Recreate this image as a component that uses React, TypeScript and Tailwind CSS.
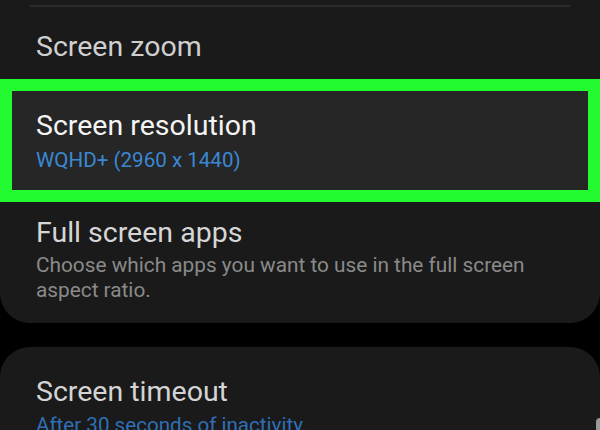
export default function App() {
  const font = { fontFamily: "Roboto, 'Noto Sans', sans-serif" };
  return (
    <div className="relative w-[600px] h-[430px] bg-black overflow-hidden flex flex-col" style={font}>
      <div className="bg-[#1a1a1a] rounded-b-[30px] flex flex-col pb-[20px]">
        <div className="mt-[5px] mx-[30px] h-[2px] bg-[#2b2b2b]" />
        <div className="mt-[23px] px-[36px] text-[28.5px] leading-[34px] text-[#cfcfcf]">Screen zoom</div>
        <div className="mt-[15px] border-[12px] border-[#22fb30] bg-[#262626] px-[24px] pt-[18px] pb-[17px] flex flex-col">
          <div className="text-[28.5px] leading-[34px] text-[#f4f4f4]">Screen resolution</div>
          <div className="mt-[4px] text-[20.6px] leading-[26px] text-[#3a88d3]">WQHD+ (2960 x 1440)</div>
        </div>
        <div className="mt-[14px] px-[36px] text-[28.5px] leading-[34px] text-[#d6d6d6]">Full screen apps</div>
        <div className="mt-[3px] px-[36px] pr-[40px] text-[20.8px] leading-[25px] text-[#8a8a8a]">
          Choose which apps you want to use in the full screen aspect ratio.
        </div>
      </div>
      <div className="mt-[24px] flex-1 bg-[#1a1a1a] rounded-t-[30px] flex flex-col pt-[28px]">
        <div className="px-[36px] text-[28.5px] leading-[34px] text-[#d4d4d4]">Screen timeout</div>
        <div className="mt-[3px] px-[36px] text-[20.6px] leading-[26px] text-[#2f6fb6]">After 30 seconds of inactivity.</div>
      </div>
      <div className="absolute right-0 top-[418px] w-[4px] h-[14px] rounded-l-full bg-[#9a9a9a]" />
    </div>
  );
}
